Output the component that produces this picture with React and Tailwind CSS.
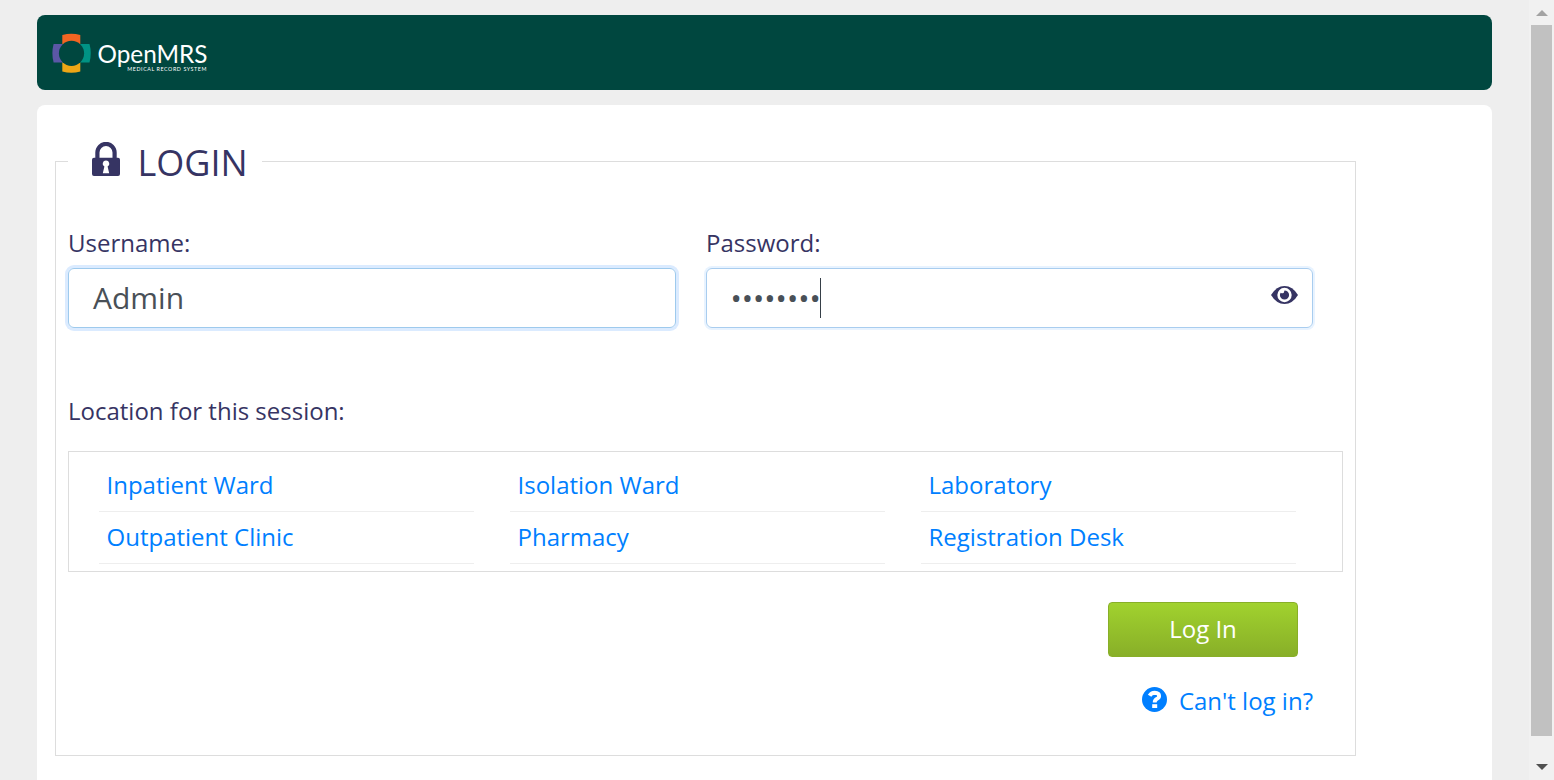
import React from "react";

const locations = [
  "Inpatient Ward",
  "Isolation Ward",
  "Laboratory",
  "Outpatient Clinic",
  "Pharmacy",
  "Registration Desk",
];

function Logo() {
  return (
    <svg className="ml-[13px] block" width="162" height="44" viewBox="50 31 162 44">
      <path d="M62.3 50V35Q71.3 32.600 80.3 35V50z" fill="#f26522" />
      <path d="M62.3 57V71.500Q71.300 74 80.300 71.500V57z" fill="#eea616" />
      <path d="M68 44H53.600Q51.200 53 53.600 62.500H68z" fill="#5b57a6" />
      <path d="M75 44H89.500Q92 53 89.500 62.500H75z" fill="#009384" />
      <circle cx="71.500" cy="53.300" r="12.600" fill="#00473f" />
      <text x="97.500" y="62.500" fontSize="24.500" textLength="110" lengthAdjust="spacingAndGlyphs" fill="#fff" className="font-['Lato',sans-serif]">OpenMRS</text>
      <text x="127.300" y="71" fontSize="5.300" textLength="79" lengthAdjust="spacing" fill="#fff" className="font-['Lato',sans-serif]">MEDICAL RECORD SYSTEM</text>
    </svg>
  );
}

function LockIcon() {
  return (
    <svg className="block shrink-0" width="28" height="35" viewBox="0 0 28 35">
      <path d="M5.400 17V10.500a8.600 8.600 0 0 1 17.200 0V17" fill="none" stroke="#363463" strokeWidth="4.200" />
      <path
        fillRule="evenodd"
        fill="#363463"
        d="M2 15.700H26Q28 15.700 28 17.700V32Q28 34 26 34H2Q0 34 0 32V17.700Q0 15.700 2 15.700ZM14 18.400A3.300 3.300 0 0 0 12.400 24.600L10.800 31.300H17.200L15.600 24.600A3.300 3.300 0 0 0 14 18.400Z"
      />
    </svg>
  );
}

function EyeIcon() {
  return (
    <svg className="block" width="27" height="18" viewBox="0 0 27 18">
      <path d="M0 9Q5.500 0 13.500 0T27 9Q21.500 18 13.500 18T0 9Z" fill="#363463" />
      <circle cx="13.500" cy="9" r="7.200" fill="#fff" />
      <path d="M13.500 4.400A4.600 4.600 0 1 1 8.900 9Q9 7.600 9.700 6.700Q12.900 8.500 13.500 4.400Z" fill="#363463" />
    </svg>
  );
}

function HelpIcon() {
  return (
    <svg className="block" width="25" height="25" viewBox="0 0 25 25">
      <circle cx="12.500" cy="12.500" r="12.500" fill="#007fff" />
      <path d="M7.600 8.700Q9.300 5.800 12.700 5.800Q17.100 6 17.100 9Q17.100 10.900 14.700 12Q12.700 13.100 12.700 15.600" fill="none" stroke="#fff" strokeWidth="3.900" />
      <rect x="10.200" y="17.200" width="5" height="3.800" fill="#fff" />
    </svg>
  );
}

function Scrollbar() {
  return (
    <div className="flex h-full w-[25px] flex-col items-center bg-[#f1f1f1]">
      <div className="flex h-[25px] items-start pt-[10px]">
        <svg className="block" width="12" height="6" viewBox="0 0 12 6"><path d="M0 6L6 0L12 6Z" fill="#a3a3a3" /></svg>
      </div>
      <div className="h-[711px] w-[21px] bg-[#c1c1c1]" />
      <div className="pt-[28px]">
        <svg className="block" width="12" height="6" viewBox="0 0 12 6"><path d="M0 0L6 6L12 0Z" fill="#505050" /></svg>
      </div>
    </div>
  );
}

export default function App() {
  return (
    <div className="flex h-[780px] w-[1554px] overflow-hidden bg-[#eeeeee] font-['Open_Sans',sans-serif] text-[24px] text-[#363463]">
      <div className="flex flex-1 flex-col gap-[15px] pt-[15px] pr-[37px] pl-[37px]">
        <header className="flex h-[75px] shrink-0 items-center rounded-[8px] bg-[#00473f]">
          <Logo />
        </header>
        <main className="h-[700px] shrink-0 rounded-t-[8px] bg-white pt-[31px] pl-[18px]">
          <fieldset className="h-[620px] w-[1301px] border border-[#dddddd] px-[12px]">
            <legend className="h-[51px] w-[194px]">
              <div className="flex items-start gap-[18px] pt-[6px] pl-[23.500px]">
                <LockIcon />
                <span className="-mt-[4px] text-[36px] leading-[49px]">LOGIN</span>
              </div>
            </legend>
            <div className="flex gap-[30px] pt-[39px]">
              <div className="w-[608px]">
                <label className="block h-[42px] leading-[34px]">Username:</label>
                <div className="flex h-[60px] items-center rounded-[6px] border border-[#9ecaed] px-[24px] pb-[2px] text-[30px] text-[#495057] shadow-[0_0_0_3px_#dbebff]">
                  Admin
                </div>
              </div>
              <div className="w-[607px]">
                <label className="block h-[42px] leading-[34px]">Password:</label>
                <div className="flex h-[60px] items-center rounded-[6px] border border-[#a9cdef] pr-[14px] pl-[24px] text-[30px] text-[#495057] shadow-[0_0_0_2px_#e8f3ff]">
                  <span className="-ml-[0.500px] pb-[2px]">••••••••</span>
                  <span className="-ml-[0.500px] h-[40px] w-px bg-[#363f48]" />
                  <span className="mb-[6px] ml-auto"><EyeIcon /></span>
                </div>
              </div>
            </div>
            <div className="pt-[66px] leading-[34px]">Location for this session:</div>
            <ul className="mt-[23px] grid h-[121px] w-[1275px] grid-cols-[375px_375px_375px] content-start gap-x-[36px] border border-[#dddddd] pt-[8px] pl-[30px] text-[#007fff]">
              {locations.map((name) => (
                <li key={name} className="h-[52px] border-b border-[#eeeeee] pl-[7.500px] leading-[49px]">{name}</li>
              ))}
            </ul>
            <div className="flex justify-end pt-[30px] pr-[45px]">
              <button className="h-[55px] w-[190px] rounded-[4px] border border-[#88af28] bg-linear-to-b from-[#a1d22e] to-[#88af28] pb-[2px] text-white">Log In</button>
            </div>
            <div className="flex items-center justify-end gap-[12px] pt-[27px] pr-[30px] text-[#007fff]">
              <span className="-mt-[3px]"><HelpIcon /></span>
              <span className="leading-[34px]">Can't log in?</span>
            </div>
          </fieldset>
        </main>
      </div>
      <Scrollbar />
    </div>
  );
}
